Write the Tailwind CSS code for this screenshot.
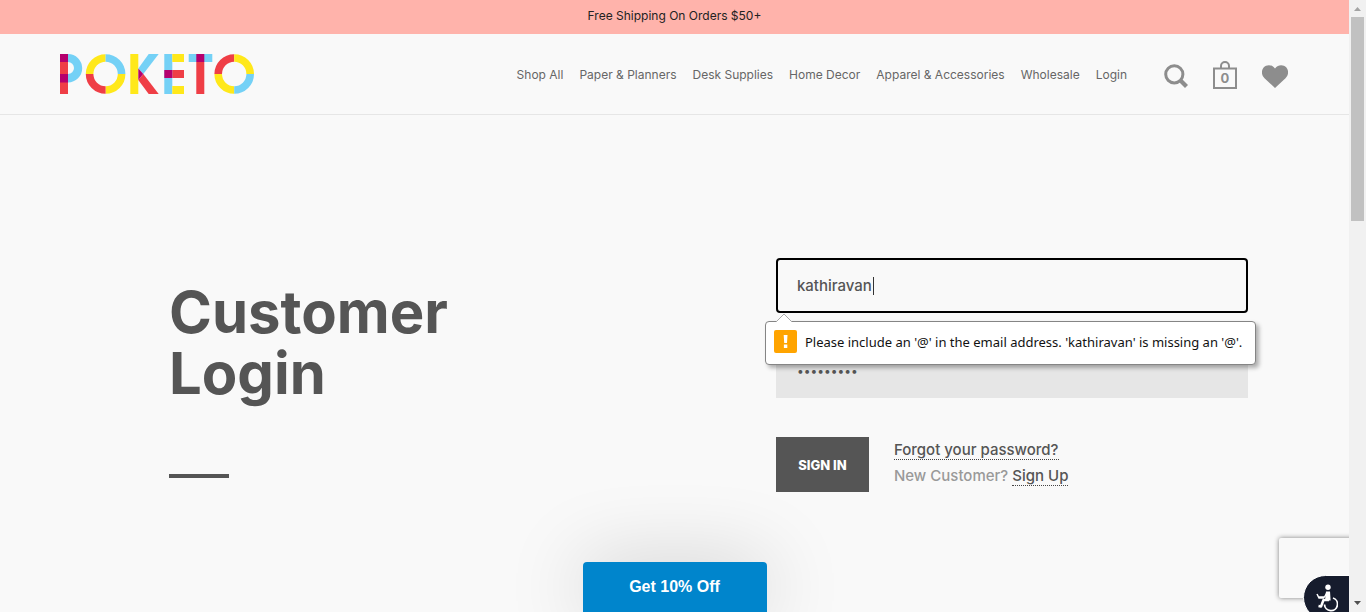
<!DOCTYPE html>
<html lang="en">
<head>
<meta charset="utf-8">
<meta name="viewport" content="width=device-width, initial-scale=1">
<title>Poketo – Customer Login</title>
<script src="https://cdn.jsdelivr.net/npm/@tailwindcss/browser@4"></script>
</head>
<body class="flex h-screen overflow-hidden bg-[#f9f9f9] font-['Inter',sans-serif] text-[#555]">
<div class="relative flex min-w-0 flex-1 flex-col overflow-hidden">
  <p class="flex h-[34px] shrink-0 items-center justify-center bg-[#ffb3ab] pb-0.5 text-[12px] text-[#222]">Free Shipping On Orders $50+</p>

  <header class="flex h-[81px] shrink-0 items-center border-b border-[#e6e6e6] pr-[61px] pl-[60px]">
    <a href="#" aria-label="Poketo" class="shrink-0">
      <svg width="195" height="40" viewBox="0 0 195 40" class="block">
        <path fill="#ef3e46" d="M0 0h8v40H0z"/>
        <path fill="#b5006e" d="M0 0h8v8H0zM0 20h8v8.500H0z"/>
        <path fill="#74d1f6" d="M8 0a14.200 14.200 0 0 1 0 28.400V20a6 6 0 0 0 0-12z"/>
        <g fill="none" stroke-width="7.600">
          <path stroke="#ffe81a" d="M29.600 20A16 16 0 0 1 45.600 4M61.600 20A16 16 0 0 1 45.600 36"/>
          <path stroke="#74d1f6" d="M45.600 4A16 16 0 0 1 61.600 20"/>
          <path stroke="#ef3e46" d="M45.600 36A16 16 0 0 1 29.600 20"/>
          <path stroke="#ef3e46" d="M158.200 20A16 16 0 0 1 174.200 4"/>
          <path stroke="#ffe81a" d="M174.200 4A16 16 0 0 1 190.200 20M174.200 36A16 16 0 0 1 158.200 20"/>
          <path stroke="#74d1f6" d="M190.200 20A16 16 0 0 1 174.200 36"/>
        </g>
        <path fill="#ffe81a" d="M70.300 0h8v40h-8z"/>
        <path fill="#74d1f6" d="M88.700 0h10L83.300 20l-5-5.500z"/>
        <path fill="#ef3e46" d="M83.300 20 98.700 40h-10L78.300 26z"/>
        <path fill="#b5006e" d="M78.300 14.500 83.300 20l-5 6z"/>
        <path fill="#74d1f6" d="M104.300 0h8v40h-8zM128.700 0h23.600v8h-23.600z"/>
        <path fill="#ffe81a" d="M112.300 0H124v8h-11.700zM112.300 32H124v8h-11.700z"/>
        <path fill="#ef3e46" d="M112.300 16H124v8h-11.700zM136.300 8h8v32h-8z"/>
        <path fill="#b5006e" d="M104.300 16h8v8h-8zM136.300 0h8v8h-8z"/>
      </svg>
    </a>
    <nav aria-label="Main" class="ml-auto flex gap-4 pt-0.5 text-[12px] whitespace-nowrap text-[#666]">
      <a href="#">Shop All</a>
      <a href="#">Paper &amp; Planners</a>
      <a href="#">Desk Supplies</a>
      <a href="#">Home Decor</a>
      <a href="#">Apparel &amp; Accessories</a>
      <a href="#">Wholesale</a>
      <a href="#">Login</a>
    </nav>
    <div class="ml-[37px] flex items-center gap-[25px] pt-1 text-[#8d8d8d]">
      <button type="button" aria-label="Search">
        <svg width="24" height="24" viewBox="0 0 24 24" fill="none" stroke="currentColor" class="block"><circle cx="10.300" cy="10.300" r="8.600" stroke-width="3"/><path d="m16 16 6.500 6.500" stroke-width="4.200"/></svg>
      </button>
      <a href="#" aria-label="Cart, 0 items" class="relative block pb-0.5">
        <svg width="24" height="28" viewBox="0 0 24 28" fill="none" stroke="currentColor" stroke-width="2" class="block"><path d="M1 7.500h22V27H1z"/><path d="M8 7.500V5a4 4 0 0 1 8 0v2.500"/></svg>
        <span class="absolute inset-x-0 top-[9px] text-center text-[13px] leading-4 font-bold">0</span>
      </a>
      <a href="#" aria-label="Wishlist">
        <svg width="26" height="23" viewBox="0 0 26 23" fill="currentColor" class="block"><path d="M13 23 2.500 13.200C-.8 10-.8 5.300 1.600 2.500 4.500-.7 9.800-.9 13 3.400 16.200-.9 21.500-.7 24.400 2.500c2.400 2.800 2.400 7.500-.9 10.700z"/></svg>
      </a>
    </div>
  </header>

  <main class="flex justify-between pt-[143px] pr-[101px] pl-[169px]">
    <div class="w-[300px] pt-6">
      <h1 class="text-[58px] leading-[61px] font-bold">Customer Login</h1>
      <div class="mt-[70px] h-1 w-[60px] bg-[#555]"></div>
    </div>
    <form class="w-7/16" novalidate>
      <div class="relative">
        <input aria-label="Email" type="email" value="kathiravan" class="block h-[55px] w-full rounded border-2 border-black bg-[#f9f9f9] px-[19px] text-[15px] font-medium text-[#555] outline-none">
        <span class="absolute top-[19px] left-[97px] h-[18px] w-px bg-[#333]"></span>
        <div role="alert" class="absolute top-[63px] -left-[11px] z-10 flex h-11 w-[104%] items-center rounded border border-[#858585] bg-white px-2 font-['Noto_Sans',sans-serif] text-[13px] whitespace-nowrap text-[#111] shadow-[3px_3px_4px_rgba(0,0,0,0.3)]">
          <svg width="18" height="9" viewBox="0 0 18 9" class="absolute -top-[9px] left-[9px]"><path d="m1 9 8-8 8 8" fill="#fff" stroke="#aaa"/></svg>
          <svg width="23" height="23" viewBox="0 0 23 23" class="mr-2 mb-1 block shrink-0"><rect width="23" height="23" rx="2" fill="#ffa400"/><path fill="#fff" d="M9.700 5h3.800l-.5 8h-2.800zM9.900 14.500h3.400v3.400H9.900z"/></svg>
          Please include an '@' in the email address. 'kathiravan' is missing an '@'.
        </div>
      </div>
      <input aria-label="Password" type="password" value="poketo123" class="mt-[30px] block h-[55px] w-full bg-[#e6e6e6] px-[21px] text-[12px] text-[#555] outline-none">
      <div class="mt-[39px] flex items-start gap-[25px]">
        <button type="submit" class="h-[55px] w-[93px] bg-[#555] pt-0.5 text-[13px] font-extrabold text-white">SIGN IN</button>
        <div class="text-[15px] leading-[26px] font-medium text-[#999]">
          <p><a href="#" class="border-b border-dotted border-[#444] text-[#555]">Forgot your password?</a></p>
          <p>New Customer? <a href="#" class="border-b border-dotted border-[#444] text-[#555]">Sign Up</a></p>
        </div>
      </div>
    </form>
  </main>

  <button type="button" class="absolute bottom-0 left-1/2 h-[50px] w-[184px] -translate-x-1/2 rounded-t bg-[#0085cc] font-['Liberation_Sans',sans-serif] text-[16px] font-bold text-white shadow-[0_0_80px_rgba(0,0,0,0.18)]">Get 10% Off</button>

  <div class="absolute -right-[186px] bottom-[14px] h-[60px] w-64 rounded-xs bg-[#f9f9f9] shadow-[0_0_5px_gray]"></div>
  <button type="button" aria-label="Accessibility options" class="absolute -right-10 -bottom-2 h-[45px] w-[86px] rounded-full border border-white bg-[#161c2d]">
    <svg width="22" height="28" viewBox="0 0 22 28" fill="none" stroke="#fff" class="absolute top-2 left-3"><circle cx="12" cy="3.200" r="2.700" fill="#fff" stroke="none"/><path d="M10 7.500h4l.6 9H9z" fill="#fff" stroke="none"/><path d="M11 8.500 8.500 13H3M1 10l2 4h5" stroke-width="1.500"/><path d="M13 16H7.500L5 22.500l-2.500-.5" stroke-width="2.500" stroke-linejoin="round"/><path d="M17 14a6.500 6.500 0 1 1-8.500 6.500" stroke-width="1.800"/></svg>
  </button>
</div>

<aside aria-hidden="true" class="flex w-[17px] shrink-0 flex-col items-center bg-[#f1f1f1]">
  <svg width="17" height="17" viewBox="0 0 17 17" class="block"><path fill="#a3a3a3" d="M8.500 7 12 11H5z"/></svg>
  <div class="h-1/3 w-[13px] bg-[#c1c1c1]"></div>
  <svg width="17" height="17" viewBox="0 0 17 17" class="mt-auto block"><path fill="#505050" d="M5 6h7l-3.500 4z"/></svg>
</aside>
</body>
</html>
